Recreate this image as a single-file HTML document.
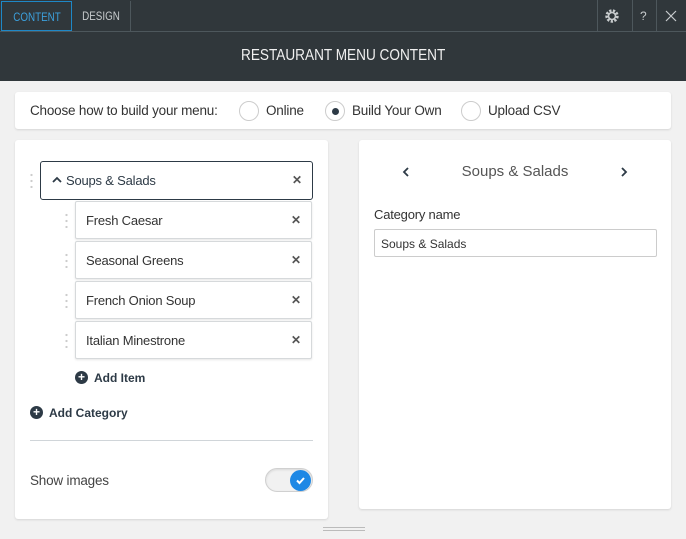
<!DOCTYPE html><html><head><style>
*{box-sizing:border-box;margin:0;padding:0}
body{width:686px;height:539px;background:#f1f1f1;font-family:"Liberation Sans",sans-serif;position:relative;overflow:hidden;color:#333}
.abs{position:absolute}
.top{left:0;top:0;width:686px;height:81px;background:#30373b}
.bar{left:0;top:0;width:686px;height:32px;border-bottom:1px solid #4d575c}
.tab{top:1px;height:30px;font-size:12px;line-height:30px;text-align:center;color:#c8ccce}
.tab i{font-style:normal;display:inline-block;transform:scaleX(.82)}
.card{background:#fff;border-radius:3px;box-shadow:0 1px 2px rgba(0,0,0,.12)}
.radio{width:20px;height:20px;border:1px solid #ccc;border-radius:50%;background:#fff}
.t{font-size:13.5px;color:#333;white-space:nowrap;letter-spacing:-.2px}
.item{left:75px;width:237px;height:38px;border:1px solid #d6d9db;border-radius:2px;background:#fff;box-shadow:0 1px 2px rgba(0,0,0,.1)}
.item span{position:absolute;left:10px;top:11px;font-size:13px;color:#333;letter-spacing:-.2px}
.x{position:absolute;right:10px;top:11px;font-size:12px;color:#555;font-weight:bold}
.dots{width:3px;height:16px;background:radial-gradient(circle,#ccc 1px,transparent 1.3px) 0 0/3px 6px repeat-y}
.plus{width:13px;height:13px;border-radius:50%;background:#2d3a46;color:#fff;font-size:12px;line-height:13px;text-align:center;font-weight:bold}
</style></head><body>
<div class="abs top"></div>
<div class="abs bar"></div>
<div class="abs tab" style="left:1px;width:71px;border:1px solid #1e88c7;color:#3ca0dc"><i>CONTENT</i></div>
<div class="abs tab" style="left:72px;width:59px;border-right:1px solid #4d575c"><i>DESIGN</i></div>
<div class="abs" style="left:597px;top:0;width:1px;height:32px;background:#4d575c"></div>
<div class="abs" style="left:632px;top:0;width:1px;height:32px;background:#4d575c"></div>
<div class="abs" style="left:656px;top:0;width:1px;height:32px;background:#4d575c"></div>
<svg class="abs" style="left:604px;top:8px" width="16" height="16" viewBox="0 0 16 16"><circle cx="8" cy="8" r="5.2" fill="none" stroke="#c8ccce" stroke-width="3" stroke-dasharray="2.2 1.4"/><circle cx="8" cy="8" r="3.5" fill="none" stroke="#c8ccce" stroke-width="1.6"/></svg>
<div class="abs" style="left:640px;top:9px;font-size:12px;color:#c8ccce">?</div>
<svg class="abs" style="left:665px;top:10px" width="12" height="12"><path d="M1 1L11 11M11 1L1 11" stroke="#c8ccce" stroke-width="1.2"/></svg>
<div class="abs" style="left:0;top:47px;width:686px;text-align:center;color:#f0f0f0;font-size:16px;"><i style="font-style:normal;display:inline-block;transform:scaleX(.85)">RESTAURANT MENU CONTENT</i></div>

<div class="abs card" style="left:15px;top:92px;width:656px;height:37px"></div>
<div class="abs t" style="left:30px;top:103px">Choose how to build your menu:</div>
<div class="abs radio" style="left:239px;top:101px"></div><div class="abs t" style="left:266px;top:103px">Online</div>
<div class="abs radio" style="left:325px;top:101px"><div style="width:7px;height:7px;border-radius:50%;background:#2d3a46;margin:5.5px"></div></div><div class="abs t" style="left:352px;top:103px">Build Your Own</div>
<div class="abs radio" style="left:461px;top:101px"></div><div class="abs t" style="left:488px;top:103px">Upload CSV</div>

<div class="abs card" style="left:15px;top:140px;width:313px;height:379px"></div>
<div class="abs card" style="left:359px;top:140px;width:312px;height:369px"></div>

<div class="abs dots" style="left:30px;top:172px"></div>
<div class="abs" style="left:40px;top:161px;width:273px;height:39px;border:1px solid #2d3a46;border-radius:3px;background:#fff">
<svg style="position:absolute;left:11px;top:14px" width="10" height="7"><path d="M1 6L5 2L9 6" stroke="#2d3a46" stroke-width="1.8" fill="none"/></svg>
<span style="position:absolute;left:25px;top:11px;font-size:13px;color:#2d3a46;letter-spacing:-.2px">Soups &amp; Salads</span><span class="x">✕</span></div>

<div class="abs dots" style="left:65px;top:212px"></div>
<div class="abs item" style="top:201px"><span>Fresh Caesar</span><b class="x">✕</b></div>
<div class="abs dots" style="left:65px;top:252px"></div>
<div class="abs item" style="top:241px"><span>Seasonal Greens</span><b class="x">✕</b></div>
<div class="abs dots" style="left:65px;top:292px"></div>
<div class="abs item" style="top:281px"><span>French Onion Soup</span><b class="x">✕</b></div>
<div class="abs dots" style="left:65px;top:332px"></div>
<div class="abs item" style="top:321px"><span>Italian Minestrone</span><b class="x">✕</b></div>

<div class="abs plus" style="left:75px;top:371px">+</div>
<div class="abs" style="left:94px;top:371px;font-size:12px;font-weight:bold;color:#2d3a46">Add Item</div>
<div class="abs plus" style="left:30px;top:406px">+</div>
<div class="abs" style="left:49px;top:406px;font-size:12px;font-weight:bold;color:#2d3a46">Add Category</div>
<div class="abs" style="left:30px;top:440px;width:283px;height:1px;background:#d0d5d9"></div>
<div class="abs t" style="left:30px;top:473px;color:#444">Show images</div>
<div class="abs" style="left:265px;top:468px;width:48px;height:24px;border-radius:12px;background:#f1f1f1;border:1px solid #d0d0d0;box-shadow:inset 0 1px 2px rgba(0,0,0,.1)"></div>
<div class="abs" style="left:290px;top:470px;width:21px;height:21px;border-radius:50%;background:#1e88e5"><svg width="21" height="21"><path d="M7 10.5L9.5 13L14 8" stroke="#fff" stroke-width="2" fill="none"/></svg></div>

<svg class="abs" style="left:402px;top:167px" width="8" height="10"><path d="M6 1L2 5L6 9" stroke="#2d3a46" stroke-width="1.8" fill="none"/></svg>
<div class="abs" style="left:359px;top:163px;width:312px;text-align:center;font-size:15px;color:#555">Soups &amp; Salads</div>
<svg class="abs" style="left:620px;top:167px" width="8" height="10"><path d="M2 1L6 5L2 9" stroke="#2d3a46" stroke-width="1.8" fill="none"/></svg>
<div class="abs t" style="left:374px;top:207px;font-size:13px">Category name</div>
<div class="abs" style="left:374px;top:229px;width:283px;height:28px;border:1px solid #ccc;border-radius:2px;background:#fff;font-size:12px;padding:7px 6px;color:#333">Soups &amp; Salads</div>

<div class="abs" style="left:323px;top:527px;width:42px;height:4px;border-top:1px solid #bbb;border-bottom:1px solid #bbb"></div>
</body></html>
